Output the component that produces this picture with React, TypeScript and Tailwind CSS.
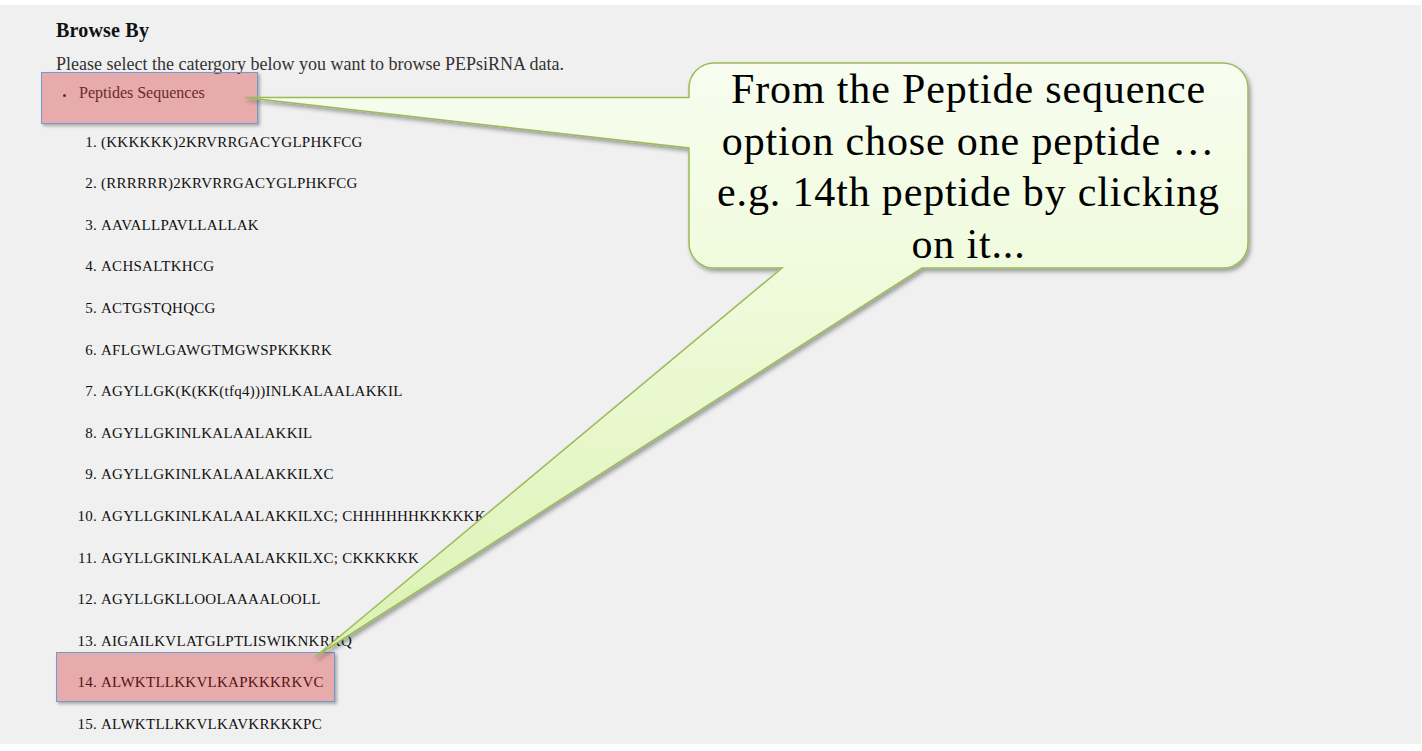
import React from "react";

const peptides = [
  "(KKKKKK)2KRVRRGACYGLPHKFCG",
  "(RRRRRR)2KRVRRGACYGLPHKFCG",
  "AAVALLPAVLLALLAK",
  "ACHSALTKHCG",
  "ACTGSTQHQCG",
  "AFLGWLGAWGTMGWSPKKKRK",
  "AGYLLGK(K(KK(tfq4)))INLKALAALAKKIL",
  "AGYLLGKINLKALAALAKKIL",
  "AGYLLGKINLKALAALAKKILXC",
  "AGYLLGKINLKALAALAKKILXC; CHHHHHHKKKKKK",
  "AGYLLGKINLKALAALAKKILXC; CKKKKKK",
  "AGYLLGKLLOOLAAAALOOLL",
  "AIGAILKVLATGLPTLISWIKNKRKQ",
  "ALWKTLLKKVLKAPKKKRKVC",
  "ALWKTLLKKVLKAVKRKKKPC",
];

function Callout() {
  const d = [
    "M714 63",
    "L1223 63",
    "A25 25 0 0 1 1248 88",
    "L1248 243",
    "A25 25 0 0 1 1223 268",
    "L922 268",
    "L315 657",
    "L782 268",
    "L714 268",
    "A25 25 0 0 1 689 243",
    "L689 148",
    "L245 97.5",
    "L689 97.5",
    "L689 88",
    "A25 25 0 0 1 714 63",
    "Z",
  ].join(" ");
  return (
    <svg
      className="absolute left-0 top-0 pointer-events-none"
      width={1422}
      height={751}
      viewBox="0 0 1422 751"
    >
      <defs>
        <linearGradient id="calloutFill" x1="0" y1="63" x2="0" y2="657" gradientUnits="userSpaceOnUse">
          <stop offset="0" stopColor="#f8fdf0" />
          <stop offset="0.35" stopColor="#f0fbdd" />
          <stop offset="1" stopColor="#dcf2b2" />
        </linearGradient>
        <filter id="calloutShadow" x="-5%" y="-5%" width="112%" height="115%">
          <feDropShadow dx="2" dy="3" stdDeviation="2" floodColor="#000" floodOpacity="0.35" />
        </filter>
      </defs>
      <path
        d={d}
        fill="url(#calloutFill)"
        stroke="#9bbb59"
        strokeWidth={1.5}
        strokeLinejoin="miter"
        filter="url(#calloutShadow)"
      />
    </svg>
  );
}

export default function App() {
  return (
    <div
      className="relative w-[1422px] h-[751px] overflow-hidden bg-white"
      style={{ fontFamily: '"Liberation Serif", "Times New Roman", serif' }}
    >
      <div className="mt-[5px] w-[1421px] h-[739px] bg-[#f0f0f0] pl-[56px] pt-[13px]">
        <h2 className="text-[20px] font-bold leading-[24px] text-[#111] tracking-[0.2px]">Browse By</h2>
        <p className="mt-[10px] text-[18px] leading-[24px] text-[#333]">
          Please select the catergory below you want to browse PEPsiRNA data.
        </p>
        <ul className="mt-[5.6px]">
          <li className="flex items-center text-[16px] leading-[22px] text-[#333]">
            <span className="ml-[6.5px] mt-[6px] w-[3.5px] h-[3.5px] rounded-full bg-[#333]" />
            <span className="ml-[13px]">Peptides Sequences</span>
          </li>
        </ul>
        <ol className="mt-[18px] list-decimal pl-[45px] text-[15px] text-[#111] tracking-[0.27px]">
          {peptides.map((p) => (
            <li key={p} className="leading-[41.6px] whitespace-nowrap">
              {p}
            </li>
          ))}
        </ol>
      </div>

      {/* highlight boxes */}
      <div className="absolute left-[41px] top-[72px] w-[217px] h-[52px] bg-[rgba(215,25,25,0.32)] border-[1.5px] border-[#6f9bd4] shadow-[2px_2px_3px_rgba(0,0,0,0.3)]" />
      <div className="absolute left-[56px] top-[652px] w-[279px] h-[50px] bg-[rgba(215,25,25,0.32)] border-[1.5px] border-[#6f9bd4] shadow-[2px_2px_3px_rgba(0,0,0,0.3)]" />

      <Callout />

      <div className="absolute left-[689px] top-[64px] w-[559px] text-center text-[42px] leading-[51.5px] tracking-[0.85px] text-black">
        <div className="whitespace-nowrap">From the Peptide sequence</div>
        <div className="whitespace-nowrap">option chose one peptide …</div>
        <div className="whitespace-nowrap">e.g. 14th peptide by clicking</div>
        <div className="whitespace-nowrap">on it...</div>
      </div>
    </div>
  );
}
